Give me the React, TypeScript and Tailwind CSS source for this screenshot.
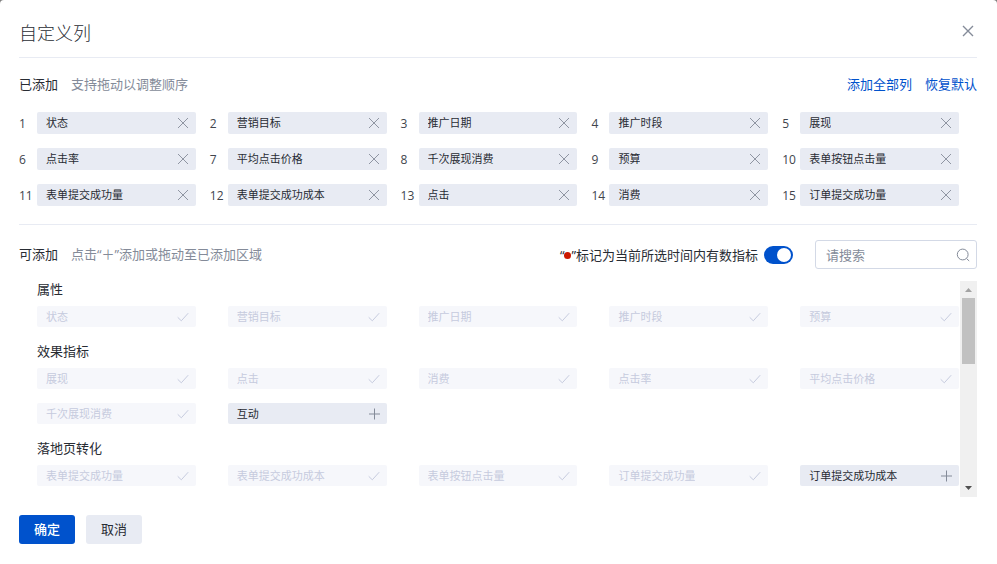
import React, { useState } from 'react'

const DEFAULT_ADDED = [
  '状态', '营销目标', '推广日期', '推广时段', '展现',
  '点击率', '平均点击价格', '千次展现消费', '预算', '表单按钮点击量',
  '表单提交成功量', '表单提交成功成本', '点击', '消费', '订单提交成功量',
]

const GROUPS = [
  { title: '属性', items: ['状态', '营销目标', '推广日期', '推广时段', '预算'] },
  {
    title: '效果指标',
    items: ['展现', '点击', '消费', '点击率', '平均点击价格', '千次展现消费', '互动'],
  },
  {
    title: '落地页转化',
    items: ['表单提交成功量', '表单提交成功成本', '表单按钮点击量', '订单提交成功量', '订单提交成功成本'],
  },
]

function CloseIcon({ className }: { className?: string }) {
  return (
    <svg viewBox="0 0 12 12" fill="none" stroke="currentColor" className={className} aria-hidden="true">
      <path d="M1 1l10 10M11 1L1 11" />
    </svg>
  )
}

function CheckIcon() {
  return (
    <svg viewBox="0 0 12 12" fill="none" stroke="currentColor" className="h-3 w-3" aria-hidden="true">
      <path d="M0.7 6.3l3.6 3.5L11.2 2.2" />
    </svg>
  )
}

function PlusIcon() {
  return (
    <svg viewBox="0 0 12 12" fill="none" stroke="currentColor" className="h-3 w-3 text-[#848b99]" aria-hidden="true">
      <path d="M6.5 0.500v11M1 6h11" />
    </svg>
  )
}

function SearchIcon() {
  return (
    <svg viewBox="0 0 14 14" fill="none" stroke="currentColor" className="h-3.5 w-3.5 shrink-0 text-[#848b99]" aria-hidden="true">
      <circle cx="6.7" cy="6.5" r="5.4" />
      <path d="M10.6 10.6l2.6 2.4" />
    </svg>
  )
}

export default function App() {
  const [added, setAdded] = useState(DEFAULT_ADDED)
  const [markData, setMarkData] = useState(true)
  const [keyword, setKeyword] = useState('')

  const addAll = () => {
    const all = GROUPS.flatMap((g) => g.items)
    setAdded([...added, ...all.filter((name) => !added.includes(name))])
  }

  return (
    <div className="min-h-screen bg-[#7f7f7f] font-['Open_Sans','Noto_Sans_CJK_SC',sans-serif] text-[13px] leading-[18px] text-[#282c33]">
      <div role="dialog" aria-labelledby="dialog-title" className="min-h-screen rounded-t-sm bg-white px-5 pb-5 pl-[19px]">
        <header className="flex h-[58px] items-center justify-between border-b border-[#e8ebf3] pt-2">
          <h1 id="dialog-title" className="text-[18px] leading-6 font-light">自定义列</h1>
          <button type="button" aria-label="关闭" className="mr-[3px] mb-1 text-[#848b99]">
            <CloseIcon className="h-3 w-3 stroke-[1.4]" />
          </button>
        </header>

        {/* Added columns */}
        <section className="border-b border-[#e8ebf3] pt-[17px] pb-[18px]">
          <div className="mb-[19px] flex items-center">
            <h2>已添加</h2>
            <p className="ml-[13px] text-[#848b99]">支持拖动以调整顺序</p>
            <div className="ml-auto flex gap-[13px] text-[#0052cc]">
              <button type="button" onClick={addAll}>添加全部列</button>
              <button type="button" onClick={() => setAdded(DEFAULT_ADDED)}>恢复默认</button>
            </div>
          </div>
          <ol className="grid grid-cols-5 gap-3.5 pr-[18px]">
            {added.map((name, i) => (
              <li key={name} className="flex items-center">
                <span className="w-[18px] shrink-0 pt-px text-[12px] whitespace-nowrap text-[#41454d]">{i + 1}</span>
                <div className="flex h-[22px] min-w-0 flex-1 items-center justify-between rounded-xs bg-[#e8ebf3] pr-[7px] pl-[9px] text-[11px]">
                  <span className="truncate">{name}</span>
                  <button
                    type="button"
                    aria-label={`移除${name}`}
                    className="text-[#848b99]"
                    onClick={() => setAdded(added.filter((n) => n !== name))}
                  >
                    <CloseIcon className="h-3 w-3 stroke-[0.9]" />
                  </button>
                </div>
              </li>
            ))}
          </ol>
        </section>

        {/* Available columns */}
        <section>
          <div className="flex items-center pt-[15px] pb-3">
            <div className="flex pb-0.5">
              <h2>可添加</h2>
              <p className="ml-[13px] text-[#848b99]">点击“＋”添加或拖动至已添加区域</p>
            </div>
            <label htmlFor="mark-data" className="ml-auto flex cursor-pointer items-center">
              <span>“</span>
              <i className="mt-0.5 h-[7px] w-[7px] rounded-full bg-[#cc1800]" />
              <span>”标记为当前所选时间内有数指标</span>
            </label>
            <input
              id="mark-data"
              type="checkbox"
              role="switch"
              checked={markData}
              onChange={(e) => setMarkData(e.target.checked)}
              className="ml-1.5 flex h-[18px] w-[29px] cursor-pointer appearance-none items-center rounded-full bg-[#c6cbd9] px-0.5 before:h-3.5 before:w-3.5 before:rounded-full before:bg-white before:content-[''] checked:justify-end checked:bg-[#0052cc]"
            />
            <div className="ml-[22px] flex h-[29px] w-[162px] items-center rounded-[3px] border border-[#d3d9e6] pr-[6px] pl-[10px]">
              <input
                type="text"
                aria-label="搜索"
                placeholder="请搜索"
                value={keyword}
                onChange={(e) => setKeyword(e.target.value)}
                className="min-w-0 flex-1 outline-none placeholder:text-[#848b99]"
              />
              <SearchIcon />
            </div>
          </div>

          <div className="flex h-[216px]">
            <div className="flex min-w-0 flex-1 flex-col gap-4 overflow-y-auto pr-px [scrollbar-width:none]">
              {GROUPS.map((group) => (
                <div key={group.title}>
                  <h3 className="mb-2 pl-[18px] leading-[17px]">{group.title}</h3>
                  <div className="grid grid-cols-5 gap-3.5">
                    {group.items
                      .filter((name) => name.includes(keyword))
                      .map((name) => {
                        const used = added.includes(name)
                        return (
                          <div key={name} className="pl-[18px]">
                            <button
                              type="button"
                              disabled={used}
                              onClick={() => setAdded([...added, name])}
                              className="flex h-[21px] w-full items-center justify-between rounded-xs bg-[#e8ebf3] pr-[7px] pl-[9px] text-[11px] disabled:bg-[#f6f7fb] disabled:text-[#c6cbde]"
                            >
                              <span className="truncate">{name}</span>
                              {used ? <CheckIcon /> : <PlusIcon />}
                            </button>
                          </div>
                        )
                      })}
                  </div>
                </div>
              ))}
            </div>
            {/* Scroll track */}
            <div className="flex w-[17px] shrink-0 flex-col items-center bg-[#f0f0f0]" aria-hidden="true">
              <svg viewBox="0 0 17 17" className="h-[17px] w-[17px] shrink-0 fill-[#a3a3a3]">
                <path d="M5 11h7L8.5 7z" />
              </svg>
              <div className="h-[66px] w-[13px] bg-[#c1c1c1]" />
              <svg viewBox="0 0 17 17" className="mt-auto h-[17px] w-[17px] shrink-0 fill-[#505050]">
                <path d="M5 6h7l-3.500 4z" />
              </svg>
            </div>
          </div>
        </section>

        <footer className="flex gap-[11px] pt-[18px]">
          <button type="button" className="h-[29px] w-14 rounded-[3px] bg-[#0052cc] pb-0.5 font-medium text-white">
            确定
          </button>
          <button type="button" className="h-[29px] w-14 rounded-[3px] bg-[#e8ebf3] pb-0.5">
            取消
          </button>
        </footer>
      </div>
    </div>
  )
}
